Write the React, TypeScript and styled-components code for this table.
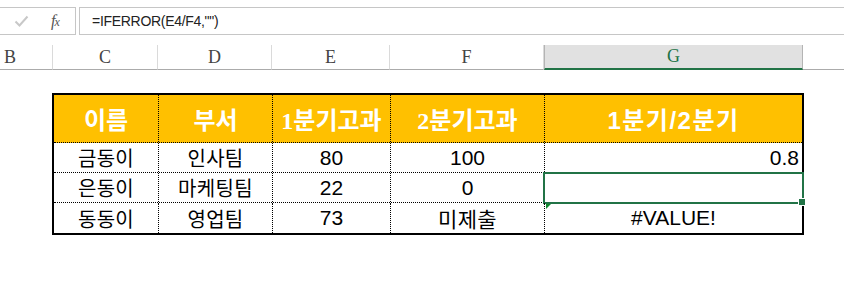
import { createGlobalStyle, styled } from "styled-components";

const GlobalStyle = createGlobalStyle`
    html, body {
        margin: 0;
        padding: 0;
        background: #fff;
        font-family: "Liberation Sans", "Noto Sans CJK KR", sans-serif;
    }
    * {
        box-sizing: border-box;
    }
`

const Page = styled.div`
    width: 844px;
    height: 292px;
    overflow: hidden;
    display: flex;
    flex-direction: column;
    background: #fff;
`

const FormulaBar = styled.div`
    display: flex;
    gap: 3px;
    height: 28px;
    margin-top: 7px;
`

const FxBox = styled.div`
    width: 76px;
    display: flex;
    align-items: center;
    border: 1px solid #c6c6c6;
    border-left: none;
    padding-left: 14px;
    gap: 22px;
`

const FxLabel = styled.span`
    font-family: "Liberation Serif", serif;
    font-style: italic;
    font-size: 16px;
    color: #555;
    letter-spacing: -1px;
    sub {
        font-size: 12px;
        vertical-align: baseline;
    }
`

const FormulaInput = styled.div`
    flex: 1;
    display: flex;
    align-items: center;
    border: 1px solid #c6c6c6;
    border-right: none;
    padding-left: 12px;
    font-size: 14px;
    letter-spacing: -0.3px;
    color: #222;
`

const ColumnHeaders = styled.div`
    display: flex;
    height: 25px;
    margin-top: 10px;
`

const ColHeader = styled.div<{ $w: number; $selected?: boolean; $left?: boolean }>`
    width: ${p => p.$w}px;
    flex: ${p => (p.$w ? "none" : "1")};
    display: flex;
    align-items: center;
    justify-content: ${p => (p.$left ? "flex-start" : "center")};
    padding-left: ${p => (p.$left ? "4px" : "0")};
    font-family: "Liberation Serif", serif;
    font-size: 18px;
    color: ${p => (p.$selected ? "#217346" : "#444")};
    background: ${p => (p.$selected ? "#e1e1e1" : "#fff")};
    border-bottom: ${p => (p.$selected ? "2px solid #217346" : "1px solid #ababab")};
    border-right: 1px solid ${p => (p.$selected ? "#b4b4b4" : "#dadada")};
    border-left: ${p => (p.$selected ? "1px solid #b4b4b4" : "none")};
    &:last-child {
        border-right: none;
    }
`

const Sheet = styled.div`
    padding: 23px 0 0 52px;
`

const Table = styled.div`
    width: 752px;
    border: 2px solid #000;
    display: flex;
    flex-direction: column;
`

const Row = styled.div<{ $h: number; $head?: boolean }>`
    display: flex;
    height: ${p => p.$h}px;
    background: ${p => (p.$head ? "#ffc000" : "#fff")};
    border-bottom: 1px dotted #000;
    &:last-child {
        border-bottom: none;
    }
`

const Cell = styled.div<{ $w: number; $align?: "center" | "right"; $num?: boolean }>`
    position: relative;
    width: ${p => p.$w}px;
    display: flex;
    align-items: center;
    justify-content: ${p => (p.$align === "right" ? "flex-end" : "center")};
    padding-right: ${p => (p.$align === "right" ? "3px" : "0")};
    border-left: 1px dotted #000;
    font-size: ${p => (p.$num ? "21px" : "20px")};
    color: #000;
    &:first-child {
        border-left: none;
    }
`

const HeadText = styled.span<{ $sans?: boolean }>`
    font-family: ${p => (p.$sans ? `"Liberation Sans"` : `"Liberation Serif"`)}, "Noto Sans CJK KR", sans-serif;
    font-weight: 700;
    font-size: 24px;
    color: #fff;
    letter-spacing: ${p => (p.$sans ? "1.5px" : "0")};
`

const KoText = styled.span`
    font-family: "Noto Sans CJK KR", sans-serif;
    letter-spacing: 0.3px;
`

const Selection = styled.div`
    position: absolute;
    left: -2px;
    top: -1px;
    right: -2px;
    bottom: -2px;
    border: 2px solid #217346;
    pointer-events: none;
    &::after {
        content: "";
        position: absolute;
        right: -3px;
        bottom: -4px;
        width: 6px;
        height: 6px;
        background: #217346;
        border: 1px solid #fff;
        border-right: none;
    }
`

const ErrorMark = styled.div`
    position: absolute;
    left: 1px;
    top: 1px;
    width: 0;
    height: 0;
    border-top: 5px solid #0f8a2e;
    border-right: 5px solid transparent;
`

const widths = [104, 114, 118, 154, 258];

const cols = [
    { l: "B", w: 53, left: true },
    { l: "C", w: 105 },
    { l: "D", w: 114 },
    { l: "E", w: 118 },
    { l: "F", w: 154 },
    { l: "G", w: 259, selected: true },
    { l: "", w: 0 },
];

const rows = [
    { name: "금동이", dept: "인사팀", q1: "80", q2: "100", ratio: "0.8" },
    { name: "은동이", dept: "마케팅팀", q1: "22", q2: "0", ratio: "" },
    { name: "동동이", dept: "영업팀", q1: "73", q2: "미제출", ratio: "#VALUE!" },
];

function CheckIcon() {
    return (
        <svg width="15" height="12" viewBox="0 0 15 12">
            <path d="M1.5 6.5 L5.5 10.5 L13.5 1.5" fill="none" stroke="#c8c8c8" strokeWidth="2" />
        </svg>
    );
}

export default function App() {
    return (
        <Page>
            <GlobalStyle />
            <FormulaBar>
                <FxBox>
                    <CheckIcon />
                    <FxLabel>f<sub>x</sub></FxLabel>
                </FxBox>
                <FormulaInput>=IFERROR(E4/F4,"")</FormulaInput>
            </FormulaBar>
            <ColumnHeaders>
                {cols.map((c, i) => (
                    <ColHeader key={i} $w={c.w} $left={c.left} $selected={c.selected}>
                        {c.l}
                    </ColHeader>
                ))}
            </ColumnHeaders>
            <Sheet>
                <Table>
                    <Row $h={48} $head>
                        <Cell $w={widths[0]}><HeadText>이름</HeadText></Cell>
                        <Cell $w={widths[1]}><HeadText>부서</HeadText></Cell>
                        <Cell $w={widths[2]}><HeadText>1분기고과</HeadText></Cell>
                        <Cell $w={widths[3]}><HeadText>2분기고과</HeadText></Cell>
                        <Cell $w={widths[4]}><HeadText $sans>1분기/2분기</HeadText></Cell>
                    </Row>
                    {rows.map((r, i) => (
                        <Row key={r.name} $h={30}>
                            <Cell $w={widths[0]}><KoText>{r.name}</KoText></Cell>
                            <Cell $w={widths[1]}><KoText>{r.dept}</KoText></Cell>
                            <Cell $w={widths[2]} $num>{r.q1}</Cell>
                            <Cell $w={widths[3]} $num>
                                {/^\d+$/.test(r.q2) ? r.q2 : <KoText>{r.q2}</KoText>}
                            </Cell>
                            <Cell $w={widths[4]} $num $align={r.ratio === "0.8" ? "right" : "center"}>
                                {r.ratio}
                                {i === 1 && <Selection />}
                                {i === 2 && <ErrorMark />}
                            </Cell>
                        </Row>
                    ))}
                </Table>
            </Sheet>
        </Page>
    );
}
